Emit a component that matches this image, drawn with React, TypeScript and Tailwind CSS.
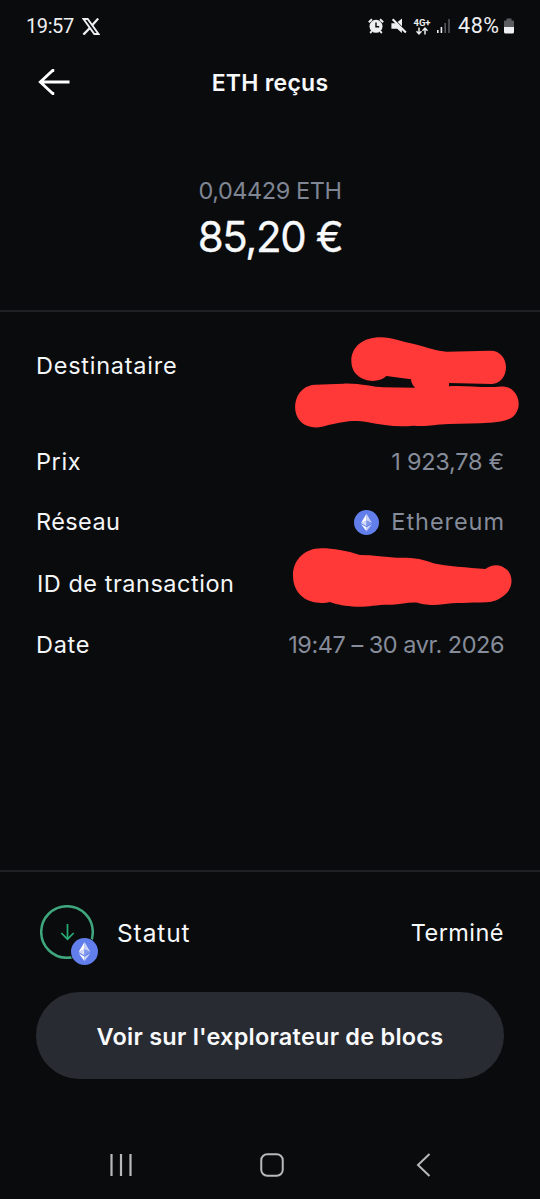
import type { ReactNode } from "react";

function EthLogo({ size }: { size: number }) {
  return (
    <svg width={size} height={size} viewBox="0 0 48 48" className="block shrink-0">
      <circle cx="24" cy="24" r="24" fill="#627eea" />
      <path d="M24 7 13.5 25 24 20.2z" fill="#fff" />
      <path d="M24 7v13.2L34.5 25z" fill="#c9d3f8" />
      <path d="M13.5 25 24 31.2V20.2z" fill="#d5dcfa" />
      <path d="M24 31.2 34.5 25 24 20.2z" fill="#8197ee" />
      <path d="M13.5 27.3 24 41v-7.7z" fill="#fff" />
      <path d="M24 33.3V41l10.5-13.7z" fill="#c9d3f8" />
    </svg>
  );
}

function StatusBar() {
  return (
    <div className="flex h-[52px] shrink-0 items-center pl-[26px] pr-[25px] font-['Roboto',sans-serif] text-[#eeeff1]">
      <span className="w-[56px] text-[20px] leading-6 tracking-[-0.4px]">19:57</span>
      <svg width="18" height="17" viewBox="0 0 18 17" fill="none" stroke="#eeeff1">
        <path d="M1.500 1h4.200l10.800 15h-4.200z" strokeWidth="1.900" />
        <path d="M16.200.6 10.200 7.300M7.600 10.200 1.400 16.600" strokeWidth="2.300" />
      </svg>
      <div className="ml-auto flex items-center">
        <svg width="16" height="16" viewBox="0 0 16 16" className="-translate-x-px" fill="#eeeff1">
          <circle cx="8" cy="8.300" r="6.500" />
          <path d="M.8 4.300 4 1.200M15.200 4.300 12 1.200M3.800 13.200 2.200 15M12.200 13.200l1.600 1.800" stroke="#eeeff1" strokeWidth="1.900" />
          <path d="M8 4.600v4.200h3.200" fill="none" stroke="#090b0d" strokeWidth="1.400" />
        </svg>
        <svg width="16" height="16" viewBox="0 0 16 16" className="ml-[6px]" fill="#eeeff1">
          <path d="M.4 5.200h4.700l5.800 5.800v4L6.200 10.800H.4z" />
          <path d="M6.600 4 11 .6v7.700z" />
          <path d="m1.600 1.200 13.300 13.400" stroke="#eeeff1" strokeWidth="2.100" />
        </svg>
        <div className="ml-[6px] flex w-[18px] flex-col items-center">
          <span className="text-[9.500px] font-bold leading-[9px]">4G+</span>
          <svg width="12" height="8" viewBox="0 0 12 8" fill="none" stroke="#eeeff1" strokeWidth="1.500">
            <path d="M3 .5v6.300M.5 4.300 3 6.900l2.500-2.600M9 7.500V1.200M6.500 3.700 9 1.100l2.500 2.600" />
          </svg>
        </div>
        <svg width="15" height="16" viewBox="0 0 15 16" className="ml-[5px]">
          <path d="M1 12h1.600v3H1zM4.600 9h1.600v6H4.600z" fill="#eeeff1" />
          <path d="M8.400 5H10v10H8.400zM12.200 1h1.600v14h-1.600z" fill="#55575a" />
        </svg>
        <span className="ml-[7px] w-[45px] whitespace-nowrap text-[21.5px] leading-6 tracking-[0.6px]">48%</span>
        <svg width="12" height="16" viewBox="0 0 12 16">
          <path d="M3.500.5h5v2H10a1 1 0 0 1 1 1V9H1V3.500a1 1 0 0 1 1-1h1.500z" fill="#5a5c5f" />
          <path d="M1 9h10v5a1.500 1.500 0 0 1-1.500 1.500h-7A1.500 1.500 0 0 1 1 14z" fill="#eeeff1" />
        </svg>
      </div>
    </div>
  );
}

function Row({ label, labelClass, className, children }: { label: string; labelClass: string; className: string; children?: ReactNode }) {
  return (
    <div className={`relative flex items-center justify-between whitespace-nowrap ${className}`}>
      <span className={`text-[#f5f6f8] ${labelClass}`}>{label}</span>
      {children}
    </div>
  );
}

export default function App() {
  return (
    <main className="flex h-[1199px] w-[540px] flex-col overflow-hidden bg-[#090b0d] font-['Inter',sans-serif] text-[23.5px] leading-8 text-[#f8f9fb]">
      <StatusBar />
      <header className="grid h-[60px] shrink-0 grid-cols-[1fr_auto_1fr] items-center">
        <svg width="34" height="28" viewBox="0 0 34 28" className="ml-[36px]" fill="none" stroke="#fff" strokeWidth="2.800">
          <path d="M33.500 14H4M18.200 2.500h-1.500L4.300 14 16.700 25.500h1.500" />
        </svg>
        <h1 className="pt-0.5 text-[23px] font-semibold tracking-[0.25px]">ETH reçus</h1>
      </header>
      <section className="flex h-[198px] shrink-0 flex-col items-center whitespace-nowrap pt-[63px]">
        <p className="text-[23.5px] leading-8 tracking-[-0.42px] text-[#7f8592]">0,04429 ETH</p>
        <p className="mt-1 text-[42px] leading-[52px] tracking-[-1.4px] [-webkit-text-stroke:0.3px]">85,20 €</p>
      </section>
      <section className="flex h-[562px] shrink-0 flex-col border-y-2 border-[#1f2124] px-9 pt-[38px]">
        <Row label="Destinataire" labelClass="tracking-[0.75px]" className="h-8">
          <svg width="260" height="115" viewBox="0 0 780 345" className="absolute -right-9 -top-[25px]" fill="#ff3838">
            <path d="M214 108C214 65 249 37 302 37C338 37 360 49 405 58C445 68 470 79 500 80L630 77C660 76 678 100 678 127C678 155 660 176 636 177L507 174L507 184C550 181 600 188 643 186C672 182 689 185 701 199C723 222 720 257 699 275C679 291 640 293 602 295L507 297C460 299 445 305 400 302C350 307 310 300 260 291C215 284 190 291 145 300C120 310 96 310 76 300C45 284 40 247 50 220C58 196 80 180 105 179L190 176C240 174 280 187 310 187L405 188Q394 178 393 163L319 153C303 168 276 172 252 163C229 154 214 135 214 108Z" />
          </svg>
        </Row>
        <Row label="Prix" labelClass="tracking-[0.6px]" className="mt-16 h-8">
          <span className="tracking-[-0.25px] text-[#868c99]">1 923,78 €</span>
        </Row>
        <Row label="Réseau" labelClass="tracking-[0.4px]" className="mt-7 h-8">
          <div className="flex items-center gap-3 text-[#868c99]">
            <EthLogo size={25} />
            <span className="-mr-px tracking-[0.95px]">Ethereum</span>
          </div>
        </Row>
        <Row label="ID de transaction" labelClass="ml-px tracking-[0.52px]" className="mt-[30px] h-8">
          <svg width="270" height="130" viewBox="0 0 810 390" className="absolute -right-9 -top-[28px]" fill="#ff3838">
            <path d="M69 106C69 57 108 24 155 25C188 25 231 32 270 45C310 45 348 52 380 53C430 52 462 57 490 70C530 79 595 83 646 87C666 71 694 71 713 91C731 112 728 145 704 165C685 181 670 185 650 187C600 189 550 188 520 193C480 198 456 192 443 188C417 185 394 194 365 194C320 193 295 201 260 200C223 198 206 195 179 186C158 192 120 190 99 172C76 154 69 130 69 106Z" />
          </svg>
        </Row>
        <Row label="Date" labelClass="tracking-[0.7px]" className="mt-[29px] h-8">
          <span className="tracking-[-0.47px] text-[#868c99]">19:47 – 30 avr. 2026</span>
        </Row>
      </section>
      <section className="flex h-[120px] shrink-0 items-center whitespace-nowrap px-9">
        <div className="relative ml-1 size-[54px]">
          <svg width="54" height="54" viewBox="0 0 54 54" className="block" fill="none">
            <circle cx="27" cy="27" r="25.800" stroke="#3fa67d" strokeWidth="2.500" />
            <path d="M27.500 19v15M21.300 28l6.200 6.200 6.200-6.200" stroke="#27ad75" strokeWidth="1.700" />
          </svg>
          <div className="absolute left-[29.5px] top-[32px] rounded-full border border-[#090b0d]">
            <EthLogo size={27} />
          </div>
        </div>
        <span className="ml-[23px] pt-0.5 text-[24.5px] tracking-[0.9px]">Statut</span>
        <span className="ml-auto pt-0.5 tracking-[0.45px]">Terminé</span>
      </section>
      <button className="mx-9 h-[87px] shrink-0 whitespace-nowrap rounded-full bg-[#282b31] pt-0.5 text-[23.5px] font-semibold tracking-[0.23px]">
        Voir sur l'explorateur de blocs
      </button>
      <nav className="mt-auto flex h-[68px] shrink-0 items-center pl-[109px]">
        <svg width="24" height="26" viewBox="0 0 24 26" stroke="#b8b9bb" strokeWidth="2.200">
          <path d="M2.500 2v22M12 2v22M21.500 2v22" />
        </svg>
        <svg width="26" height="26" viewBox="0 0 26 26" fill="none" stroke="#b8b9bb" strokeWidth="2" className="ml-[126px]">
          <rect x="2.250" y="2.250" width="21.500" height="21.500" rx="6" />
        </svg>
        <svg width="16" height="26" viewBox="0 0 16 26" fill="none" stroke="#b8b9bb" strokeWidth="2" className="ml-[131px]">
          <path d="M13.500 2 2 13l11.500 11" />
        </svg>
      </nav>
    </main>
  );
}
